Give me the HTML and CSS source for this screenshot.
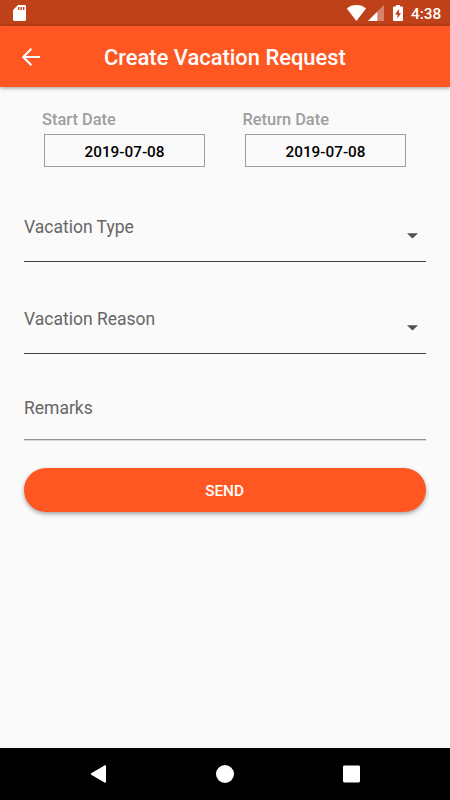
FILE: index.html
```html
<!DOCTYPE html>
<html lang="en">
<head>
<meta charset="utf-8">
<title>Create Vacation Request</title>
<link rel="stylesheet" href="styles.css">
</head>
<body>
<div class="screen">
  <div class="status">
    <svg class="sd" width="13" height="16" viewBox="0 0 13 16"><path fill="#fff" fill-rule="evenodd" d="M5 0H11.6Q13 0 13 1.4V14.6Q13 16 11.6 16H1.4Q0 16 0 14.6V5ZM5 2V5H6.4V2ZM7.5 2V5H8.9V2ZM10 2V5H11.4V2Z"/></svg>
    <svg class="wifi" width="20" height="16" viewBox="0 0 20 16"><path fill="#fff" d="M.8 3.4Q4.8 0 10.4 0T20 3.4L10.4 16Z"/></svg>
    <svg class="signal" width="16" height="16" viewBox="0 0 16 16"><path fill="#fff" fill-opacity=".35" d="M16 0V16H0Z"/><path fill="#fff" d="M9.3 6.7V16H0Z"/></svg>
    <svg class="battery" width="10" height="16" viewBox="0 0 10 16"><path fill="#fff" fill-rule="evenodd" d="M3 0H7V1.5H9Q10 1.5 10 2.5V15Q10 16 9 16H1Q0 16 0 15V2.5Q0 1.5 1 1.5H3ZM6 4L2 9.6H4.5V13.6L8 8H6Z"/></svg>
    <span class="clock">4:38</span>
  </div>
  <header class="appbar">
    <svg class="back" width="18" height="18" viewBox="0 0 18 18"><path d="M9.4 .8L1.3 9L9.4 17.2M1.5 9H18" fill="none" stroke="#fff" stroke-width="2.1"/></svg>
    <h1 class="title">Create Vacation Request</h1>
  </header>
  <main class="form">
    <div class="dates">
      <div class="date"><span class="date-label start">Start Date</span><div class="date-box">2019-07-08</div></div>
      <div class="date"><span class="date-label return">Return Date</span><div class="date-box">2019-07-08</div></div>
    </div>
    <div class="field select"><span class="label type">Vacation Type</span><svg class="caret" width="11" height="6" viewBox="0 0 11 6"><path d="M0 .3H11L5.5 5.6Z" fill="#505050"/></svg></div>
    <div class="field select reason-field"><span class="label reason">Vacation Reason</span><svg class="caret" width="11" height="6" viewBox="0 0 11 6"><path d="M0 .3H11L5.5 5.6Z" fill="#505050"/></svg></div>
    <div class="field remarks-field"><span class="label remarks">Remarks</span></div>
    <button class="send">SEND</button>
  </main>
  <nav class="nav">
    <svg width="16" height="18" viewBox="0 0 16 18"><path d="M15.3 1V17L1.6 9Z" fill="#fff" stroke="#fff" stroke-width="1.5" stroke-linejoin="round"/></svg>
    <svg width="18" height="18" viewBox="0 0 18 18"><circle cx="9" cy="9" r="9" fill="#fff"/></svg>
    <svg width="17" height="18" viewBox="0 0 17 18"><rect y=".4" width="17" height="17" rx="1.3" fill="#fff"/></svg>
  </nav>
</div>
</body>
</html>
```
FILE: styles.css
```css
* { box-sizing: border-box; }
body { margin: 0; font-family: Roboto, sans-serif; background: #fafafa; }
.screen { width: 450px; height: 800px; display: flex; flex-direction: column; overflow: hidden; }
.status { height: 26px; flex: none; background: #bf4119; display: flex; align-items: center; padding: 0 9px 0 13px; color: #fff; }
.status svg { display: block; }
.wifi { margin-left: auto; }
.signal { margin-left: 2px; }
.battery { margin-left: 9px; }
.clock { margin-left: 8px; width: 30px; font-size: 15.3px; line-height: 26px; font-weight: 500; padding-top: 2px; white-space: nowrap; }
.appbar { height: 61px; flex: none; background: #ff5722; display: grid; grid-template-columns: 82px 1fr; align-items: center; padding-left: 22px; color: #fff; box-shadow: 0 1px 4px rgba(0,0,0,.4); }
.back { display: block; }
.title { margin: 0; font-size: 21.9px; line-height: 26px; font-weight: 500; padding-top: 3px; white-space: nowrap; }
.form { flex: 1; padding: 22px 24px 0; }
.dates { display: flex; gap: 40px; padding: 0 20px; }
.date { width: 161px; }
.date-label { display: block; margin-left: -2px; font-size: 16.4px; line-height: 22px; font-weight: 500; color: #9e9e9e; white-space: nowrap; }
.return { margin-left: -2.5px; }
.date-box { height: 33px; margin-top: 3px; border: 1px solid #9e9e9e; font-size: 15.3px; line-height: 34px; font-weight: 500; text-align: center; color: #000; }
.field { border-bottom: 1px solid #424242; display: flex; justify-content: space-between; }
.select { height: 50px; margin-top: 45px; }
.label { font-size: 17.5px; line-height: 22px; padding-top: 4px; color: #666; white-space: nowrap; }
.caret { margin: 21px 8px 0 0; }
.reason-field { margin-top: 42px; }
.remarks { padding-top: 1px; }
.remarks-field { height: 44px; margin-top: 42px; border-color: #929292; box-shadow: 0 1px #d8d8d8; }
.send { display: block; width: 402px; height: 44px; margin-top: 28px; padding: 1px 1px 0 0; border: 0; border-radius: 22px; background: #ff5722; color: #fff; font: 500 15.3px/44px Roboto, sans-serif; box-shadow: 0 2px 4px rgba(0,0,0,.35); }
.nav { height: 52px; flex: none; background: #000; display: flex; align-items: center; justify-content: space-between; padding: 0 90px; }
```
